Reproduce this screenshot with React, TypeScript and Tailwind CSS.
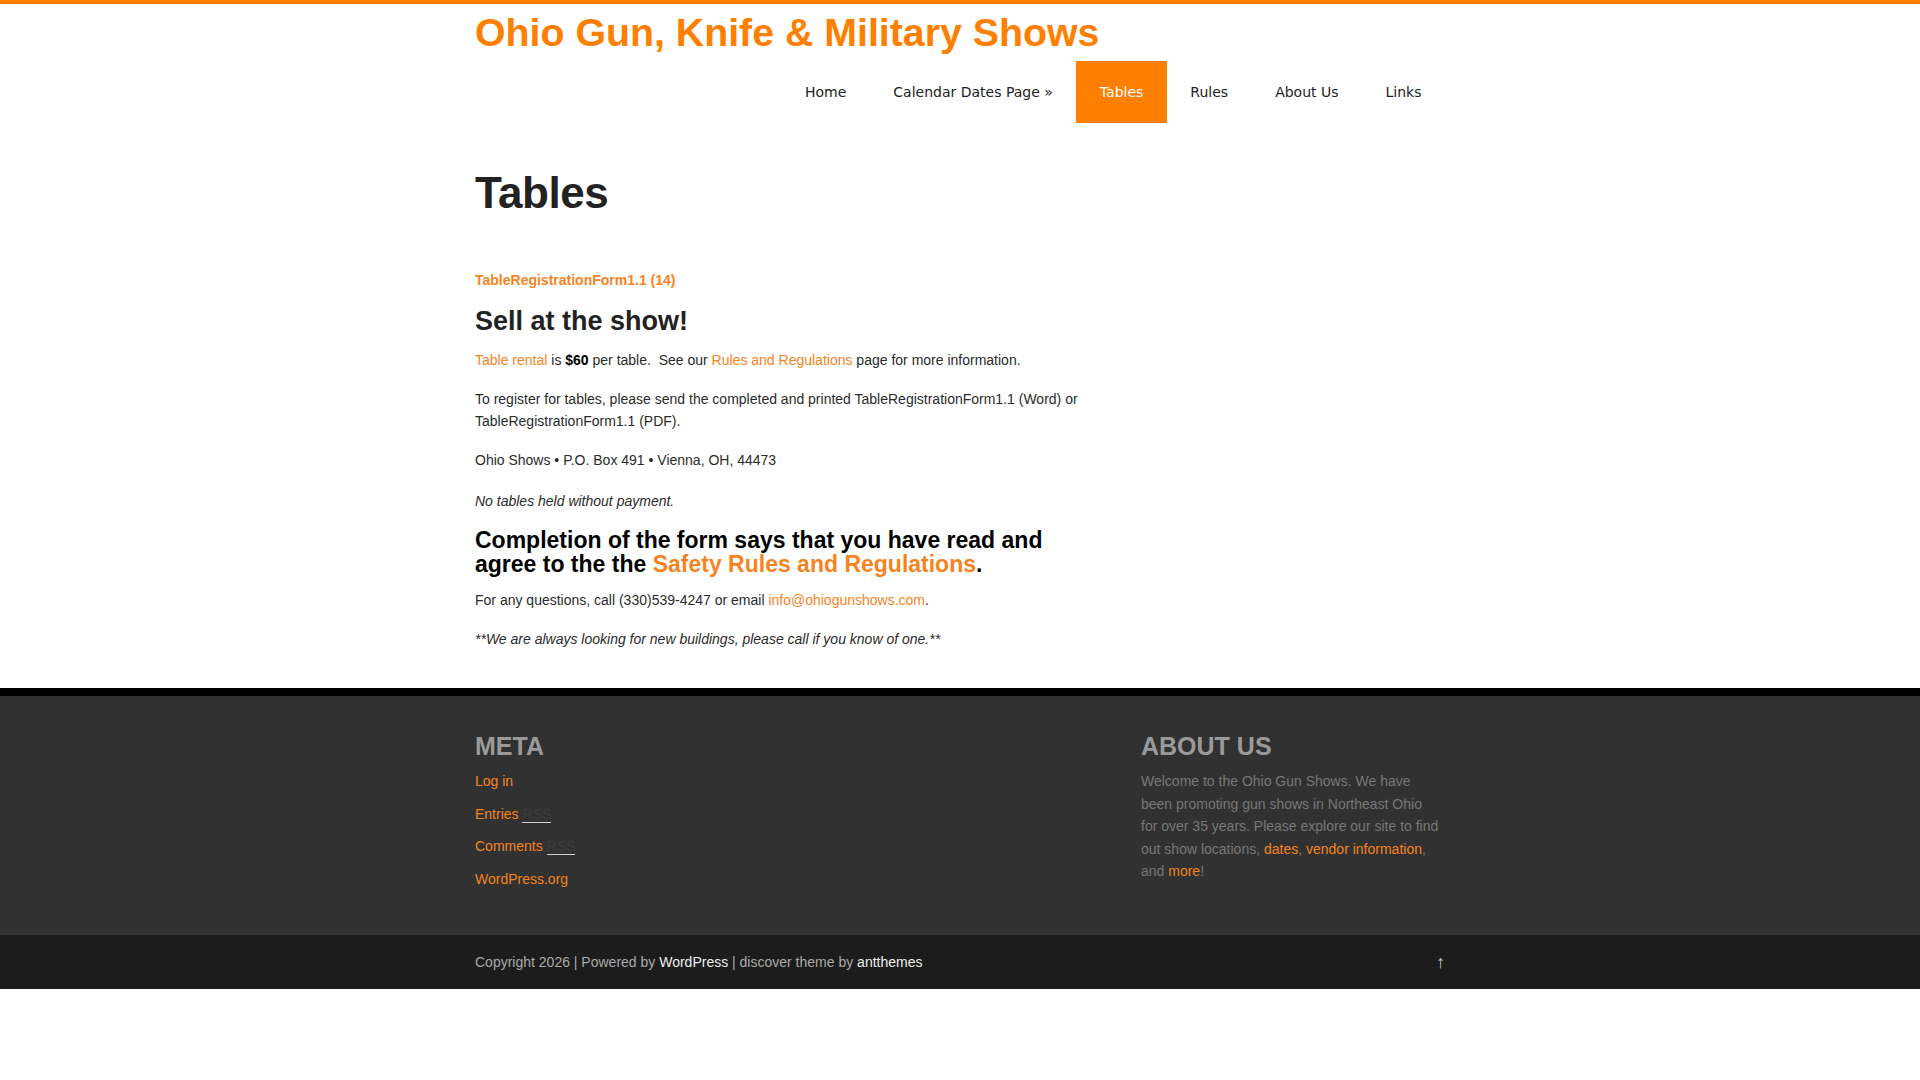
const ORANGE = 'text-[#f5841f]';

const navItems = [
  { label: 'Home' },
  { label: 'Calendar Dates Page »' },
  { label: 'Tables', active: true },
  { label: 'Rules' },
  { label: 'About Us' },
  { label: 'Links' },
];

function Header() {
  return (
    <header className="mx-auto w-[970px]">
      <div className="pt-[6px]">
        <a href="#" className="text-[39.3px] leading-[45px] font-bold text-[#ff7f00]">
          Ohio Gun, Knife &amp; Military Shows
        </a>
      </div>
      <nav className="mt-[6px] flex justify-end font-['DejaVu_Sans',sans-serif] text-[14px]">
        {navItems.map((item) => (
          <a
            key={item.label}
            href="#"
            className={
              item.active
                ? 'flex h-[62px] items-center bg-[#ff7f00] px-[23.5px] text-white'
                : 'flex h-[62px] items-center px-[23.5px] text-[#222]'
            }
          >
            {item.label}
          </a>
        ))}
      </nav>
    </header>
  );
}

function Content() {
  return (
    <main className="mx-auto w-[970px] pb-[38px] text-[14px] leading-[22px] text-[#2b2b2b]">
      <div className="w-[620px]">
        <h1 className="mt-[46px] text-[44px] leading-[48px] font-bold tracking-[-0.5px] text-[#222]">Tables</h1>

        <p className="mt-[52px] font-bold">
          <a href="#" className={ORANGE}>TableRegistrationForm1.1 (14)</a>
        </p>

        <h2 className="mt-[15px] text-[27px] leading-[30px] font-bold text-[#222]">Sell at the show!</h2>

        <p className="mt-[13px]">
          <a href="#" className={ORANGE}>Table rental</a> is <strong className="text-black">$60</strong> per table.&nbsp; See our{' '}
          <a href="#" className={ORANGE}>Rules and Regulations</a> page for more information.
        </p>
        <p className="mt-[17px]">
          To register for tables, please send the completed and printed TableRegistrationForm1.1 (Word) or
          TableRegistrationForm1.1 (PDF).
        </p>
        <p className="mt-[17px]">Ohio Shows • P.O. Box 491 • Vienna, OH, 44473</p>
        <p className="mt-[19px] italic">No tables held without payment.</p>

        <h2 className="mt-[16px] text-[23px] leading-[24px] font-bold text-black">
          Completion of the form says that you have read and agree to the the{' '}
          <a href="#" className={ORANGE}>Safety Rules and Regulations</a>.
        </h2>

        <p className="mt-[13px]">
          For any questions, call (330)539-4247 or email{' '}
          <a href="#" className={ORANGE}>info@ohiogunshows.com</a>.
        </p>
        <p className="mt-[17px] italic">**We are always looking for new buildings, please call if you know of one.**</p>
      </div>
    </main>
  );
}

function Footer() {
  return (
    <footer>
      <div className="border-t-8 border-black bg-[#313131] text-[14px] leading-[22px]">
        <div className="mx-auto flex w-[970px] pt-[35px] pb-[45px]">
          {/* Meta widget */}
          <div className="w-[666px]">
            <h3 className="text-[25px] leading-[30px] font-bold text-[#9a9a9a]">META</h3>
            <ul className={`mt-[9px] flex flex-col gap-[10.5px] ${ORANGE}`}>
              <li><a href="#">Log in</a></li>
              <li>
                <a href="#">Entries</a>{' '}
                <span className="border-b border-[#d0d0d0] text-[#3c3c3c]">RSS</span>
              </li>
              <li>
                <a href="#">Comments</a>{' '}
                <span className="border-b border-[#d0d0d0] text-[#3c3c3c]">RSS</span>
              </li>
              <li><a href="#">WordPress.org</a></li>
            </ul>
          </div>

          {/* About widget */}
          <div className="w-[300px]">
            <h3 className="text-[25px] leading-[30px] font-bold text-[#9a9a9a]">ABOUT US</h3>
            <p className="mt-[9px] leading-[22.5px] text-[#777]">
              Welcome to the Ohio Gun Shows. We have been promoting gun shows in Northeast Ohio for over 35 years.
              Please explore our site to find out show locations, <a href="#" className={ORANGE}>dates</a>,{' '}
              <a href="#" className={ORANGE}>vendor information</a>, and <a href="#" className={ORANGE}>more</a>!
            </p>
          </div>
        </div>
      </div>

      <div className="bg-[#1c1c1c] py-4 text-[14px] leading-[22px] text-[#aaa]">
        <div className="mx-auto flex w-[970px] items-center justify-between">
          <p>
            Copyright 2026 | Powered by <a href="#" className="text-[#eee]">WordPress</a> | discover theme by{' '}
            <a href="#" className="text-[#eee]">antthemes</a>
          </p>
          <a href="#" className="text-[18px] text-[#ccc]">↑</a>
        </div>
      </div>
    </footer>
  );
}

export default function App() {
  return (
    <div className="min-h-screen bg-white font-['Liberation_Sans',Arial,sans-serif]">
      <div className="h-1 bg-[#ff7f00]" />
      <Header />
      <Content />
      <Footer />
    </div>
  );
}
